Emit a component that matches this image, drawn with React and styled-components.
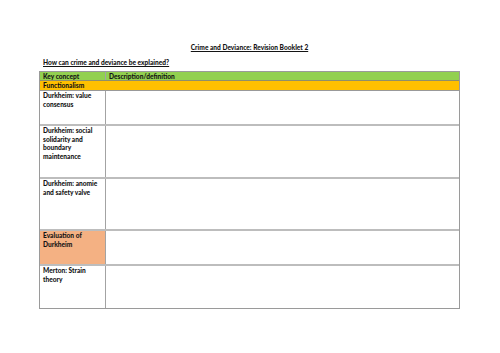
import React from 'react';
import styled, { createGlobalStyle } from 'styled-components';

const GlobalStyle = createGlobalStyle`
  html, body {
    margin: 0;
    padding: 0;
    background: #fff;
  }
  body {
    font-family: Lato, 'Open Sans', sans-serif;
    color: #141414;
    -webkit-font-smoothing: antialiased;
  }
`;

const Page = styled.div`
  width: 500px;
  height: 353px;
  box-sizing: border-box;
  padding: 43px 40px 0 39px;
  display: flex;
  flex-direction: column;
`;

const Title = styled.h1`
  margin: 0;
  font-size: 6.6px;
  line-height: 8px;
  font-weight: 900;
  text-align: center;
  text-decoration: underline;
  width: 421px;
`;

const Question = styled.h2`
  margin: 7px 0 0 4px;
  font-size: 6.6px;
  line-height: 8px;
  font-weight: 900;
  text-decoration: underline;
`;

const Table = styled.div`
  margin-top: 5px;
  width: 421px;
  border: 1px solid #9a9a9a;
  box-sizing: border-box;
  display: flex;
  flex-direction: column;
`;

const Row = styled.div`
  display: flex;
  height: ${p => p.h}px;
  box-sizing: border-box;
  border-top: ${p => p.line || 'none'};
  background: ${p => p.bg || 'transparent'};
`;

const Cell = styled.div`
  box-sizing: border-box;
  width: ${p => (p.wide ? 'auto' : '66px')};
  flex: ${p => (p.wide ? '1' : 'none')};
  border-right: ${p => (p.wide ? 'none' : '1px solid #a3a3a3')};
  background: ${p => p.bg || 'transparent'};
  padding: 0 3px;
  font-size: 6.6px;
  line-height: 8.7px;
  font-weight: 900;
`;

const SectionCell = styled.div`
  flex: 1;
  padding: 0 3px;
  font-size: 6.6px;
  line-height: 9px;
  font-weight: 900;
`;

const rows = [
  { h: 34, label: ['Durkheim: value', 'consensus'] },
  { h: 53, label: ['Durkheim: social', 'solidarity and', 'boundary', 'maintenance'] },
  { h: 52, label: ['Durkheim: anomie', 'and safety valve'] },
  { h: 35, label: ['Evaluation of', 'Durkheim'], bg: '#f4b183' },
  { h: 44, label: ['Merton: Strain', 'theory'] },
];

const App = () => (
  <>
    <GlobalStyle />
    <Page>
      <Title>Crime and Deviance: Revision Booklet 2</Title>
      <Question>How can crime and deviance be explained?</Question>
      <Table>
        <Row h={8} bg="#92d050">
          <Cell>Key concept</Cell>
          <Cell wide>Description/definition</Cell>
        </Row>
        <Row h={10} bg="#ffc000" line="1px solid #8f8f6a">
          <SectionCell>Functionalism</SectionCell>
        </Row>
        {rows.map((r, i) => (
          <Row key={i} h={r.h} line={i === 0 ? '1px solid #999' : '2px solid #bdbdbd'}>
            <Cell bg={r.bg}>
              {r.label.map((t, j) => (
                <div key={j}>{t}</div>
              ))}
            </Cell>
            <Cell wide />
          </Row>
        ))}
      </Table>
    </Page>
  </>
);

export default App;
